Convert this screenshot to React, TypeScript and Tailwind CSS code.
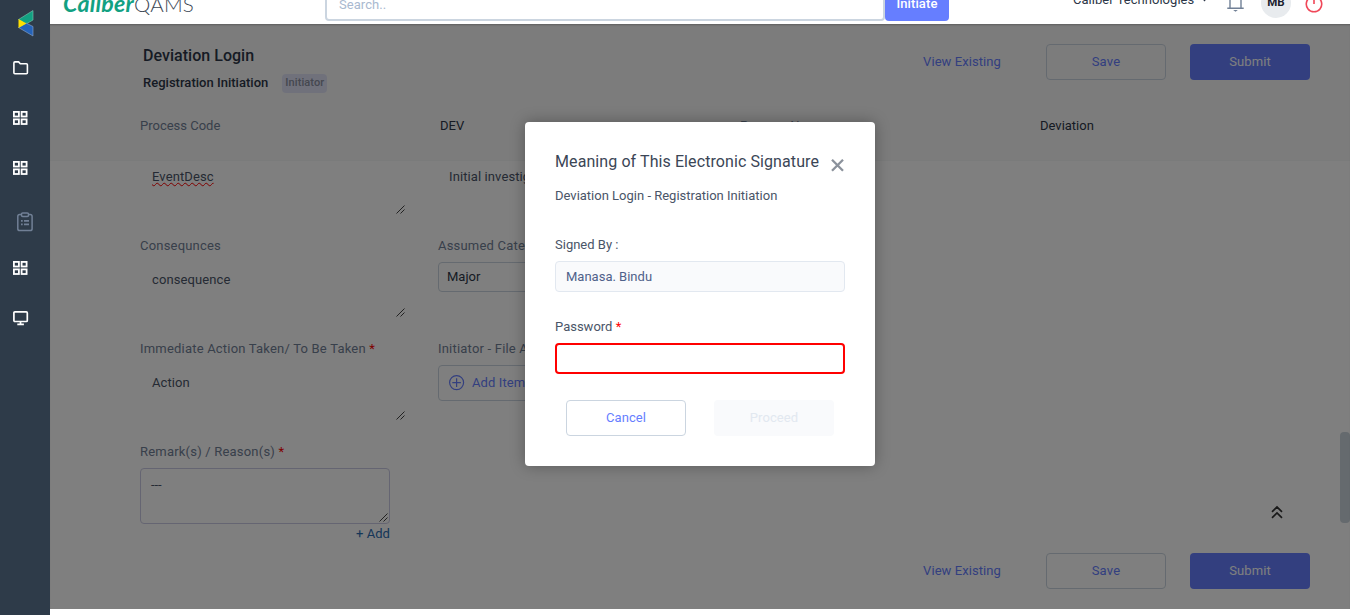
import React from "react";

function GridIcon() {
  return (
    <svg width="15" height="15" viewBox="0 0 15 15">
      <g fill="none" stroke="#fff" strokeWidth="1.800">
        <rect x=".9" y=".9" width="5" height="4.600" />
        <rect x="8.600" y=".9" width="5" height="4.600" />
        <rect x=".9" y="8.400" width="5" height="4.600" />
        <rect x="8.600" y="8.400" width="5" height="4.600" />
      </g>
    </svg>
  );
}

function Sidebar() {
  return (
    <aside className="flex h-full w-[50px] shrink-0 flex-col bg-[#2e3b49] pt-[10px] pl-[13px]">
      <svg className="ml-[4px] shrink-0" width="18" height="27" viewBox="0 0 18 27">
        <path d="M1.500 9.500 16 .5v9.500L9 14z" fill="#12a182" stroke="#7fc4b0" strokeWidth=".6" />
        <path d="M1.500 17.500 16 26V16.500L9 13z" fill="#2563b8" stroke="#8da9d0" strokeWidth=".6" />
        <path d="M1.500 9 9.500 13.500 1.500 18z" fill="#ffe000" />
      </svg>
      <svg className="mt-[24px] shrink-0" width="16" height="14" viewBox="0 0 16 14" fill="none" stroke="#fff" strokeWidth="1.600" strokeLinejoin="round">
        <path d="M.9 1.900Q.9.900 1.900.900H5.600L7.300 2.700H13.400Q14.400 2.700 14.400 3.700V11.800Q14.400 12.800 13.400 12.800H1.900Q.9 12.800.9 11.800z" />
      </svg>
      <div className="mt-[36px] h-[15px]"><GridIcon /></div>
      <div className="mt-[35px] h-[15px]"><GridIcon /></div>
      <svg className="mt-[36px] ml-[4px] shrink-0" width="16" height="20" viewBox="0 0 16 20" fill="none" stroke="#718096" strokeWidth="1.500">
        <path d="M4.500 2.600H2.700Q.8 2.600.8 4.500V16.700Q.8 18.600 2.700 18.600H13.200Q15.100 18.600 15.100 16.700V4.500Q15.100 2.600 13.200 2.600H11.500" />
        <rect x="4.500" y=".9" width="7" height="3.500" rx="1.200" />
        <path d="M4 8.800h1.700M7 8.800h5M4 12.300h1.700M7 12.300h5" strokeWidth="1.800" />
      </svg>
      <div className="mt-[29px] h-[15px]"><GridIcon /></div>
      <svg className="mt-[35px] shrink-0" width="16" height="15" viewBox="0 0 16 15" fill="none" stroke="#fff" strokeWidth="1.700">
        <rect x=".9" y=".9" width="13.400" height="9.600" rx="1" />
        <path d="M7.500 10.500v3M4.300 13.300h6.600" />
      </svg>
    </aside>
  );
}

function Header() {
  return (
    <header className="relative flex h-[24px] shrink-0 items-end overflow-hidden bg-white">
      <svg className="ml-[12px] shrink-0" width="134" height="24" viewBox="0 0 134 24">
        <text x="1" y="11.500" fontFamily="Lato, sans-serif" fontSize="22" fontWeight="700" fontStyle="italic" fill="#12a182" textLength="71" lengthAdjust="spacingAndGlyphs">Caliber</text>
        <text x="72" y="11.500" fontFamily="Lato, sans-serif" fontSize="20" fontWeight="300" fill="#3b4754" textLength="60" lengthAdjust="spacingAndGlyphs">QAMS</text>
      </svg>
      <div className="mb-[3px] ml-[129px] flex h-[36px] w-[560px] shrink-0 items-center rounded-[4px] border-2 border-[#cbd5e0] pt-[3px] pl-[12px] text-[13px] tracking-[0.050px] text-[#a9b9d0]">
        Search..
      </div>
      <div className="mb-[3px] flex h-[36px] w-[64px] shrink-0 items-center justify-center rounded-[4px] bg-[#667eff] pt-[2px] text-[13px] font-medium tracking-[0.100px] text-white">
        Initiate
      </div>
      <div className="mb-[16px] ml-[124px] flex h-[16px] w-[136px] shrink-0 items-center text-[13px] leading-[16px] tracking-[0.030px] whitespace-nowrap text-[#2d3748]">
        Caliber Technologies
        <svg className="ml-[8px] shrink-0" width="5" height="4" viewBox="0 0 5 4"><path d="M0 .5h5L2.500 3.500z" fill="#2d3748" /></svg>
      </div>
      <svg className="mb-[12px] ml-[18px] shrink-0" width="17" height="20" viewBox="0 0 17 20" fill="none" stroke="#718096" strokeWidth="1.400">
        <path d="M3 16V8a5.500 5.500 0 0 1 11 0v8M.3 16.300h16.400" />
        <path d="M6.200 18h4.600L8.500 19.800z" fill="#718096" stroke="none" />
      </svg>
      <div className="mb-[6px] ml-[17px] flex h-[30px] w-[30px] shrink-0 items-center justify-center rounded-full bg-[#e8ebee] text-[11.500px] font-bold tracking-normal text-[#1a202c]">
        MB
      </div>
      <svg className="mb-[11px] ml-[14px] shrink-0" width="18" height="20" viewBox="0 0 18 20" fill="none" stroke="#f04758" strokeWidth="1.600">
        <path d="M5.500 4.200a7.700 7.700 0 1 0 7 0M9 1v10" />
      </svg>
    </header>
  );
}

function Actions() {
  return (
    <div className="flex h-[36px] items-center text-[13px] tracking-[0.200px] text-[#667eff]">
      <span className="mr-[45px] tracking-[0.080px]">View Existing</span>
      <button className="mr-[24px] h-[36px] w-[120px] rounded-[4px] border border-[#cbd5e0]">Save</button>
      <button className="h-[36px] w-[120px] rounded-[4px] bg-[#667eff] tracking-[0.100px] text-white">Submit</button>
    </div>
  );
}

function Grip() {
  return (
    <svg className="absolute right-[1px] bottom-[1px]" width="9" height="9" viewBox="0 0 9 9" stroke="#444" strokeWidth="1">
      <path d="M.5 8.500 8.500.5M4.500 8.500 8.500 4.500" />
    </svg>
  );
}

function Label({ children, required }: { children: React.ReactNode; required?: boolean }) {
  return (
    <div className="mb-[6px] h-[20px] leading-[20px] tracking-[0.200px] whitespace-nowrap text-[#718096]">
      {children}
      {required && <span className="text-[#ff0000]"> *</span>}
    </div>
  );
}

function Area({ children }: { children: React.ReactNode }) {
  return (
    <div className="relative mb-[21px] h-[56px] w-[266px] pt-[8px] pl-[12px] leading-[20px] tracking-[0.100px] text-[#4a5568]">
      {children}
      <Grip />
    </div>
  );
}

function FormPage() {
  return (
    <div className="flex h-full flex-col">
      <section className="h-[137px] shrink-0 border-b border-[#f5f6f7] bg-[#f9f9f9] pt-[20px]">
        <div className="flex h-[36px] justify-between pr-[40px] pl-[93px]">
          <div className="text-[#2d3748]">
            <h1 className="h-[24px] text-[16px] leading-[24px] font-medium tracking-[0.030px]">Deviation Login</h1>
            <div className="mt-[5px] flex h-[20px] items-center">
              <h2 className="text-[13px] font-medium tracking-[0.020px]">Registration Initiation</h2>
              <span className="ml-[14px] flex h-[19px] w-[45px] items-center justify-center rounded-[4px] bg-[#e0e3f7] pt-[1px] text-[11px] font-medium tracking-[0.100px] text-[#8a8fa0]">Initiator</span>
            </div>
          </div>
          <Actions />
        </div>
        <div className="mt-[36px] grid grid-cols-[300px_300px_300px_auto] pl-[90px] leading-[20px] tracking-normal text-[#2d3748]">
          <span className="text-[#718096]">Process Code</span>
          <span>DEV</span>
          <span className="text-[#718096]">Process Name</span>
          <span>Deviation</span>
        </div>
      </section>
      <section className="flex h-[383px] shrink-0 pl-[90px]">
        <div className="w-[298px]">
          <div className="relative mb-[21px] h-[54px] w-[266px] pt-[6px] pl-[12px] leading-[20px] tracking-[0.100px] text-[#4a5568]">
            <span className="underline decoration-[#ff0000] decoration-wavy decoration-[0.500px] underline-offset-[1px]">EventDesc</span>
            <Grip />
          </div>
          <Label>Consequnces</Label>
          <Area>consequence</Area>
          <Label required>Immediate Action Taken/ To Be Taken</Label>
          <Area>Action</Area>
          <Label required>Remark(s) / Reason(s)</Label>
          <div className="relative h-[56px] w-[250px] rounded-[4px] border border-[#cbcbe4] pt-[6px] pl-[10px] leading-[20px] tracking-[-0.100px] text-[#4a5568]">
            ---
            <Grip />
          </div>
          <div className="w-[250px] text-right leading-[20px] tracking-[0.050px] text-[#2b6cb0]">+ Add</div>
        </div>
        <div className="w-[250px]">
          <div className="mb-[21px] h-[54px] pt-[6px] pl-[11px] leading-[20px] tracking-[0.100px] whitespace-nowrap text-[#4a5568]">Initial investigation</div>
          <Label>Assumed Category</Label>
          <div className="mb-[47px] flex h-[30px] items-center rounded-[4px] border border-[#cbd5e0] pl-[8px] tracking-normal text-[#2d3748]">Major</div>
          <Label>Initiator - File Attachments</Label>
          <div className="flex h-[36px] items-center rounded-[4px] border border-[#cbd5e0] pl-[10px] tracking-[0.100px] text-[#667eff]">
            <svg className="mr-[7px]" width="16" height="16" viewBox="0 0 16 16" fill="none" stroke="#667eff" strokeWidth="1.200">
              <circle cx="7.600" cy="7.600" r="7" />
              <path d="M7.600 3.300v8.600M3.300 7.600h8.600" />
            </svg>
            Add Item
          </div>
        </div>
      </section>
      <footer className="flex justify-end pt-[9px] pr-[40px]">
        <Actions />
      </footer>
      <svg className="absolute top-[481px] left-[1221px]" width="12" height="14" viewBox="0 0 12 14" fill="none" stroke="#333" strokeWidth="1.700">
        <path d="M1 6.800 6 2l5 4.800M1 12.800 6 8l5 4.800" />
      </svg>
      <div className="absolute top-[408px] right-0 h-[91px] w-[10px] rounded-[4px] bg-[#cbd5dc]" />
    </div>
  );
}

function SignatureDialog() {
  return (
    <div className="h-[344px] w-[350px] rounded-[4px] bg-white px-[30px] pt-[28px] tracking-normal text-[#4a5568] shadow-[0_0_15px_rgba(0,0,0,0.300)]">
      <div className="flex h-[24px] justify-between">
        <h3 className="text-[16px] leading-[24px] tracking-[0.090px] whitespace-nowrap text-[#3b4656]">Meaning of This Electronic Signature</h3>
        <svg className="mt-[9px] mr-[1px] shrink-0" width="13" height="13" viewBox="0 0 13 13" stroke="#8b929c" strokeWidth="2.300">
          <path d="M1 .8l11 11M12 .8 1 11.800" />
        </svg>
      </div>
      <p className="mt-[12px] leading-[20px]">Deviation Login - Registration Initiation</p>
      <div className="mt-[29px] leading-[20px]">Signed By :</div>
      <div className="mt-[6px] flex h-[31px] items-center rounded-[4px] border border-[#e2e8f0] bg-[#f9fafc] pl-[10px] text-[#4f618a]">Manasa. Bindu</div>
      <div className="mt-[25px] leading-[20px]">Password <span className="text-[#ff0000]">*</span></div>
      <div className="mt-[6px] h-[31px] rounded-[4px] border-2 border-[#ff0000]" />
      <div className="mt-[26px] flex justify-between px-[11px] tracking-[0.100px]">
        <button className="h-[36px] w-[120px] rounded-[4px] border border-[#cbd5e0] text-[#667eff]">Cancel</button>
        <button className="h-[36px] w-[120px] rounded-[4px] bg-[#f9fafc] text-[#e2e8f0]">Proceed</button>
      </div>
    </div>
  );
}

export default function App() {
  return (
    <div className="flex h-[615px] w-[1350px] overflow-hidden bg-white font-[Roboto,sans-serif] text-[13px] tracking-[0.200px]">
      <Sidebar />
      <div className="flex min-w-0 flex-1 flex-col">
        <Header />
        <main className="relative h-[585px] overflow-hidden">
          <FormPage />
          <div className="absolute inset-0 flex items-start justify-center bg-black/50 pt-[98px] shadow-[inset_0_2px_2px_-1px_rgba(0,0,0,0.250)]">
            <SignatureDialog />
          </div>
        </main>
      </div>
    </div>
  );
}
